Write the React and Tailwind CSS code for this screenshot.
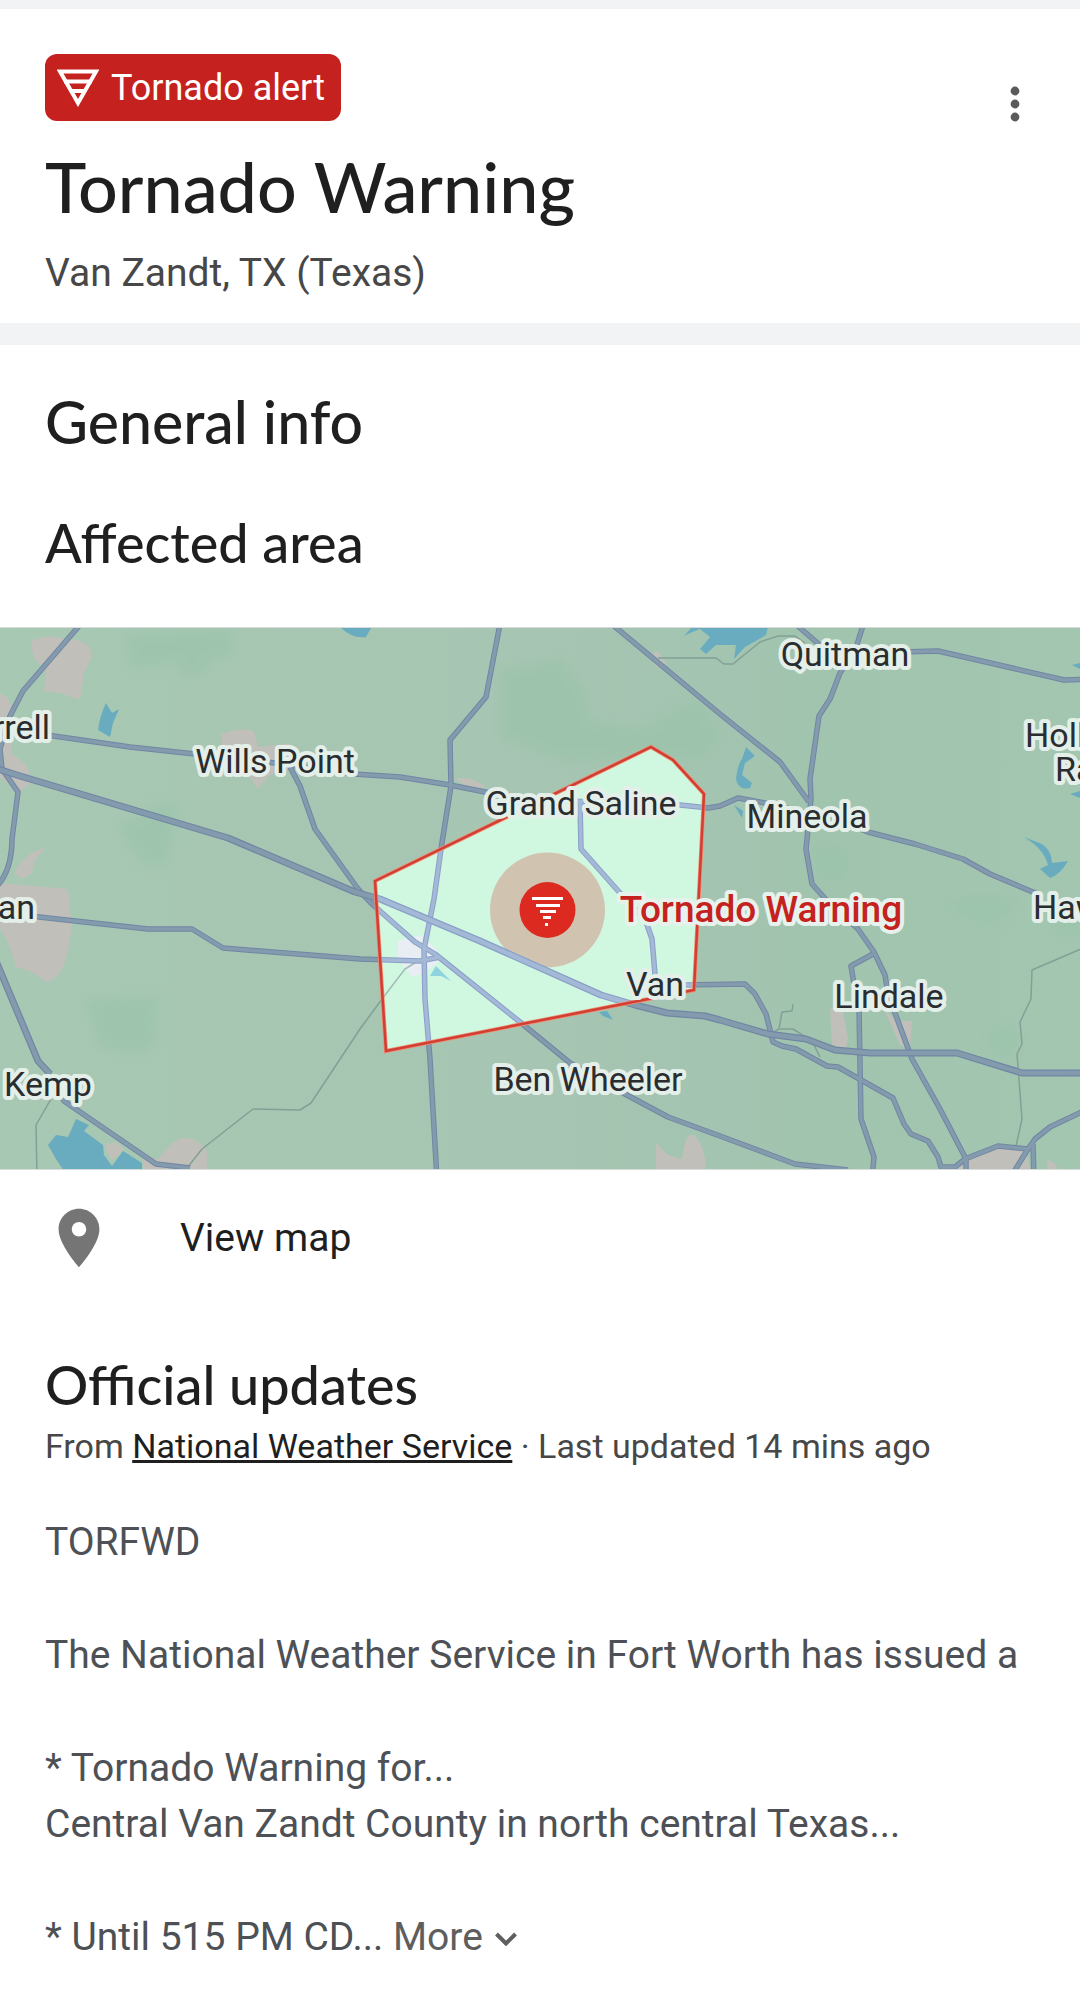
import React from "react";

const AREA = "375,882 651,748 673,761 704,795 694,991 386,1052";

const HIGHWAYS = [
  "M85 620 L23 692 L10 717 L0 750 L2 770 L18 793 L12 840 Q12 870 -2 886",
  "M40 735 L130 748 L195 755 L275 764 L354 775 L400 778 L450 786 L490 794 L540 801 L680 806 L708 809 L720 807 L738 799 L765 804 L810 815",
  "M290 768 L300 787 L315 830 L358 890 L372 905 L415 943 L435 955 L445 963 L520 1023 L570 1064 L625 1095 L668 1118 L720 1137 L795 1165 L848 1171",
  "M501 620 L486 698 L450 741 L451 787 L441 850 L434 900 L424 950 L425 1000 L430 1060 L437 1180",
  "M608 622 L720 715 L780 763 L809 803",
  "M865 620 L855 652 L840 674 L830 700 L819 717 L810 780 L811 800 L808 830 L806 850 L812 885 L830 905 L858 930 L874 953 L885 976 L888 995 L895 1014 L912 1060 L940 1110 L966 1160 L966 1180",
  "M792 622 L822 648",
  "M900 653 L938 652 L1064 681 L1090 680",
  "M850 826 L868 833 L915 845 L963 860 L990 875 L1040 896",
  "M580 803 L581 850 L620 894 L645 920 L652 940 L655 975 L650 988",
  "M680 986 L745 985 L755 995 L766 1015 L773 1043 L782 1047 L796 1050 L827 1067 L838 1068 L893 1099 L904 1125 L911 1135 L928 1142 L938 1158 L941 1168 L955 1168 L965 1160 L998 1147 L1028 1150 L1035 1140 L1050 1128 L1090 1109",
  "M873 955 L851 967 L854 985 L859 1010 L861 1120 L874 1158 L872 1180",
  "M30 917 L148 930 L192 930 L223 949 L360 960 L420 962 L440 958",
  "M46 1070 L64 1102 L156 1165 L190 1169",
  "M1033 1145 L1034 1180",
  "M1028 1150 L1012 1176",
];

const INTERSTATES = [
  "M-5 769 L20 777 L228 839 L355 893 L380 900 L480 942 L601 996 L635 1006 L667 1014 L705 1017 L720 1021 L768 1035 L806 1040 L835 1051 L870 1054 L957 1054 L1022 1074 L1090 1074",
  "M-4 962 L38 1062 L50 1075",
];

const MINOR = [
  "M187 1169 L202 1150 L253 1110 L300 1111 L311 1104 L360 1030 L382 1000 L405 970 L418 962",
  "M51 1100 L36 1126 L37 1180",
  "M1090 946 L1032 971 L1031 1000 L1020 1023 L1022 1045 L1017 1055 L1022 1120 L1016 1147",
  "M658 659 L716 659 L724 665 L733 665 L760 643 L778 637 L795 637 L805 644",
  "M793 1005 L792 1012 L782 1013 L779 1030 L770 1035",
  "M780 1030 L793 1030 L812 1042 L820 1058",
];

const TOWNS = [
  "M32 642 Q46 634 66 640 Q92 640 92 658 L84 674 L80 701 L60 694 L44 692 L46 668 Q30 664 32 642 Z",
  "M0 694 Q14 700 12 720 L12 755 Q34 768 30 785 L18 794 L0 778 Z",
  "M222 735 Q240 728 254 732 L258 748 L290 744 L292 770 L270 776 L258 790 L245 770 L222 760 Z",
  "M14 874 Q26 852 46 849 Q32 860 32 874 L22 880 Z",
  "M0 884 L68 890 L72 930 L66 960 Q58 984 44 982 Q30 970 16 968 Q8 940 0 930 Z",
  "M158 1160 L172 1144 Q186 1134 200 1144 L207 1152 L207 1172 L143 1172 L143 1158 Z",
  "M104 1146 L116 1143 L124 1150 L112 1162 Z",
  "M656 1144 L668 1156 L682 1160 Q686 1128 696 1138 Q706 1150 706 1172 L656 1172 Z",
  "M830 1010 L842 1006 L848 1040 L846 1049 L832 1046 Z",
  "M884 1010 L896 1022 L912 1022 L910 1050 L900 1046 Z",
  "M952 1172 L964 1158 L996 1148 L1026 1152 L1030 1172 Z",
  "M1048 1172 Q1044 1156 1054 1164 L1060 1172 Z",
  "M456 780 Q470 776 486 788 L470 790 Z",
  "M648 656 L658 652 L666 664 L656 668 Z",
];

const FORESTS = [
  "M125 634 L230 630 L236 656 L206 664 L206 676 L180 676 L178 664 L130 670 Z",
  "M160 804 L178 806 L176 826 L166 866 L140 864 L118 828 Z",
  "M84 1000 L158 998 L156 1040 L142 1055 L100 1050 Z",
  "M500 670 L560 660 L585 690 L590 720 L640 730 L700 700 L720 740 L700 760 L560 762 L500 740 Z",
  "M810 848 L848 848 L846 882 L820 880 Z",
  "M950 900 L1012 900 L1006 915 L985 925 L972 916 L958 912 Z",
  "M1056 905 L1080 905 L1080 936 L1056 932 Z",
  "M990 1032 L1016 1032 L1014 1056 L992 1054 Z",
];

const LAKES = [
  "M106 704 L112 714 L119 710 L113 724 L110 738 L98 731 Q100 716 106 704 Z",
  "M340 620 L376 620 L366 638 Q352 640 340 628 Z",
  "M684 637 L692 628 L768 628 L766 636 L745 648 L734 660 L736 646 L716 646 L706 655 L700 650 L710 638 L700 630 L690 634 Z",
  "M746 748 L755 757 L745 764 L742 776 L752 784 L750 789 Q738 792 736 780 Q738 764 742 760 Z",
  "M734 806 L743 812 L742 819 Z",
  "M1072 666 L1080 664 L1080 670 Z",
  "M1070 795 L1080 792 L1080 799 Z",
  "M1024 838 L1042 845 Q1052 852 1052 864 L1068 862 Q1060 876 1050 879 L1040 870 L1048 866 Q1044 850 1024 838 Z",
  "M48 1146 L56 1136 L68 1138 L76 1120 L89 1126 L84 1132 L103 1146 L104 1156 L112 1167 L123 1152 L142 1164 L142 1172 L64 1172 L56 1160 Z",
  "M599 1013 L607 1012 L613 1021 L603 1017 Z",
];

const LABELS = [
  { text: "rrell", x: 50, y: 740, anchor: "end" },
  { text: "Wills Point", x: 275, y: 774 },
  { text: "Grand Saline", x: 581, y: 816 },
  { text: "Quitman", x: 845, y: 667 },
  { text: "Holly", x: 1025, y: 748, anchor: "start" },
  { text: "Ranch", x: 1055, y: 782, anchor: "start" },
  { text: "Mineola", x: 807, y: 829 },
  { text: "an", x: 35, y: 920, anchor: "end" },
  { text: "Hawkins", x: 1033, y: 920, anchor: "start" },
  { text: "Kemp", x: 48, y: 1097 },
  { text: "Ben Wheeler", x: 588, y: 1092 },
  { text: "Van", x: 655, y: 997 },
  { text: "Lindale", x: 889, y: 1009 },
];

function Roads({ casing, fill, minor }) {
  return (
    <g fill="none" strokeLinejoin="round">
      {MINOR.map((d) => (
        <path key={d} d={d} stroke={minor} strokeWidth="1.5" />
      ))}
      {HIGHWAYS.map((d) => (
        <path key={d} d={d} stroke={casing} strokeWidth="5.5" />
      ))}
      {HIGHWAYS.map((d) => (
        <path key={d} d={d} stroke={fill} strokeWidth="3.5" />
      ))}
      {INTERSTATES.map((d) => (
        <path key={d} d={d} stroke={casing} strokeWidth="7" />
      ))}
      {INTERSTATES.map((d) => (
        <path key={d} d={d} stroke={fill} strokeWidth="4.5" />
      ))}
    </g>
  );
}

function AreaMap() {
  return (
    <svg
      viewBox="0 629 1080 541"
      className="block h-auto w-full"
      role="img"
      aria-label="Map of the area affected by the Tornado Warning"
    >
      <defs>
        <clipPath id="warned">
          <polygon points={AREA} />
        </clipPath>
        <linearGradient id="land" x1="0" x2="1" y1="0" y2="0">
          <stop offset="0" stopColor="#a7c8b3" />
          <stop offset="0.5" stopColor="#a6c5b2" />
          <stop offset="0.75" stopColor="#a1c4af" />
          <stop offset="1" stopColor="#a2c6b0" />
        </linearGradient>
        <filter id="soft" x="-20%" y="-20%" width="140%" height="140%">
          <feGaussianBlur stdDeviation="5" />
        </filter>
      </defs>
      <rect x="0" y="629" width="1080" height="541" fill="url(#land)" />
      <g fill="#98c3a9" opacity="0.5" filter="url(#soft)">
        {FORESTS.map((d) => (
          <path key={d} d={d} />
        ))}
      </g>
      <g fill="#c0bfba">
        {TOWNS.map((d) => (
          <path key={d} d={d} />
        ))}
      </g>
      <g fill="#69acc0">
        {LAKES.map((d) => (
          <path key={d} d={d} />
        ))}
      </g>
      <Roads casing="#7186a4" fill="#849bae" minor="#82a096" />

      <g clipPath="url(#warned)">
        <rect x="370" y="740" width="340" height="320" fill="#d0f7e0" />
        <path
          d="M398 942 L420 936 L436 950 L440 962 L424 974 L412 978 L398 960 Z"
          fill="#e9eef5"
        />
        <path d="M436 967 L442 973 L451 982 L441 977 L430 977 Z" fill="#8fd3e0" />
        <circle cx="547.5" cy="911" r="57.5" fill="#d0c4b1" />
        <Roads casing="#8a9fc9" fill="#a3b9d6" minor="#a3bdb4" />
      </g>
      <polygon points={AREA} fill="none" stroke="#f58a6c" strokeWidth="4" />
      <polygon points={AREA} fill="none" stroke="#cf3f36" strokeWidth="2.5" />
      <circle cx="547.5" cy="911" r="28" fill="#dc2a21" />
      <g fill="#fff">
        <rect x="532" y="898" width="31" height="3" />
        <rect x="536" y="905" width="24" height="3" />
        <rect x="540" y="911" width="16" height="3" />
        <rect x="543" y="917" width="8" height="3" />
        <rect x="545" y="924" width="3" height="3" />
      </g>

      <g
        className="font-['Roboto',sans-serif] text-[34px]"
        fill="#2a2d2f"
        stroke="#e4efe9"
        strokeWidth="8"
        strokeLinejoin="round"
        paintOrder="stroke"
      >
        {LABELS.map((l) => (
          <text key={l.text} x={l.x} y={l.y} textAnchor={l.anchor || "middle"}>
            {l.text}
          </text>
        ))}
      </g>
      <text
        x="761"
        y="923"
        textAnchor="middle"
        className="font-['Roboto',sans-serif] text-[37px] font-medium"
        fill="#c5221f"
        stroke="#e8f2ec"
        strokeWidth="8"
        strokeLinejoin="round"
        paintOrder="stroke"
      >
        Tornado Warning
      </text>
    </svg>
  );
}

function Header() {
  return (
    <header className="flex items-start justify-between bg-white px-[45px] pt-[45px] pb-[26px]">
      <div>
        <div className="flex h-[67px] w-fit items-center gap-3 rounded-xl bg-[#c5221f] pr-4 pl-3 text-white">
          <svg viewBox="0 0 42 38" className="h-[38px] w-[42px]" fill="none" stroke="currentColor" aria-hidden="true">
            <path d="M3 2.5 H39 L21 34 Z" strokeWidth="4" />
            <path d="M7 12.5 H35 M13 22 H29" strokeWidth="4" />
          </svg>
          <span className="text-[36px] leading-[48px]">Tornado alert</span>
        </div>
        <h1 className="mt-[23px] font-['Lato',sans-serif] text-[70px] leading-[84px] font-medium text-[#1f1f1f]">
          Tornado Warning
        </h1>
        <p className="mt-[21px] text-[39px] leading-[48px] text-[#474747]">Van Zandt, TX (Texas)</p>
      </div>
      <button type="button" aria-label="More options" className="mt-6 flex h-[52px] w-10 items-center justify-center text-[#5a5a5a]">
        <svg viewBox="0 0 10 36" className="h-9 w-[10px]" fill="currentColor" aria-hidden="true">
          <circle cx="5" cy="5" r="4.4" />
          <circle cx="5" cy="18" r="4.4" />
          <circle cx="5" cy="31" r="4.4" />
        </svg>
      </button>
    </header>
  );
}

export default function App() {
  return (
    <div className="bg-[#f1f3f4] pt-[9px] font-['Roboto',sans-serif]">
      <Header />
      <main className="mt-[22px] bg-white pb-[30px]">
        <section>
          <div className="px-[45px] font-['Lato',sans-serif] font-medium text-[#1f1f1f]">
            <h2 className="pt-[45px] text-[59px] leading-[64px]">General info</h2>
            <h3 className="mt-[59px] text-[54px] leading-[60px]">Affected area</h3>
          </div>
          <div className="mt-[54px] border-y border-[#d5dcd9]">
            <AreaMap />
          </div>
          <a href="#map" className="mt-[33px] flex items-center gap-[66px] px-[44px] text-[39px] leading-[48px] text-[#1f1f1f]">
            <svg viewBox="0 0 24 24" className="h-[70px] w-[70px] text-[#757575]" fill="currentColor" aria-hidden="true">
              <path d="M12 2C8.13 2 5 5.13 5 9c0 5.25 7 13 7 13s7-7.75 7-13c0-3.87-3.13-7-7-7zm0 9.5a2.5 2.5 0 0 1 0-5 2.5 2.5 0 0 1 0 5z" />
            </svg>
            View map
          </a>
        </section>
        <section className="mt-[82px] px-[45px]">
          <h3 className="font-['Lato',sans-serif] text-[54px] leading-[60px] font-medium text-[#1f1f1f]">
            Official updates
          </h3>
          <p className="mt-[9px] text-[34px] leading-[44px] text-[#474747]">
            From{" "}
            <a href="#nws" className="text-[#1f1f1f] underline">
              National Weather Service
            </a>{" "}
            · Last updated 14 mins ago
          </p>
          <div className="mt-[46px] space-y-[57px] text-[39px] leading-[56px] text-[#4d5156]">
            <p>TORFWD</p>
            <p>The National Weather Service in Fort Worth has issued a</p>
            <p>
              * Tornado Warning for...
              <br />
              Central Van Zandt County in north central Texas...
            </p>
            <p>
              * Until 515 PM CD...{" "}
              <button type="button" className="inline-flex items-center gap-3 text-[#5e5e5e]">
                More
                <svg viewBox="0 0 22 14" className="mt-1 h-[14px] w-[22px]" fill="none" stroke="currentColor" strokeWidth="4" aria-hidden="true">
                  <path d="M1.5 2 L11 11.5 L20.5 2" />
                </svg>
              </button>
            </p>
          </div>
        </section>
      </main>
    </div>
  );
}
